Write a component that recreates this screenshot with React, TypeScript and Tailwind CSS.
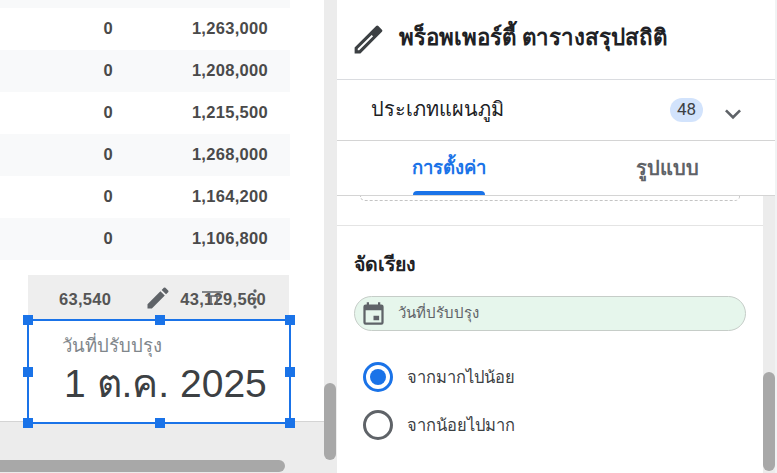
import React from 'react';

const font = "font-['Roboto','Noto_Sans','Liberation_Sans',sans-serif]";

const rows = [
  { value: '1,263,000', stripe: false },
  { value: '1,208,000', stripe: true },
  { value: '1,215,500', stripe: false },
  { value: '1,268,000', stripe: true },
  { value: '1,164,200', stripe: false },
  { value: '1,106,800', stripe: true },
];

const Handle = ({ className }: { className: string }) => (
  <span className={`absolute w-[10px] h-[10px] bg-[#1a73e8] ${className}`} />
);

const Canvas = () => (
  <div className="relative h-[422px] bg-white border-b border-[#d4d4d4] font-['Liberation_Sans',sans-serif]">
    <div className="w-[290px] h-[8px] bg-[#f8f9fa]" />
    {rows.map((r) => (
      <div
        key={r.value}
        className={`w-[290px] h-[42px] pb-[2px] flex items-center justify-end text-[16.5px] tracking-[0.3px] font-bold text-[#4a4a4a] ${r.stripe ? 'bg-[#f8f9fa]' : 'bg-white'}`}
      >
        <span>0</span>
        <span className="w-[177px] pr-[22px] text-right">{r.value}</span>
      </div>
    ))}
    <div className="mt-[15px] ml-[28px] w-[261px] h-[46px] bg-[#eeeeee] flex items-start pt-[14px] text-[16.5px] leading-[20px] tracking-[0.3px] font-bold text-[#555555]">
      <span className="ml-[31px]">63,540</span>
      <span className="ml-[69px]">43,129,560</span>
    </div>

    {/* hover toolbar icons */}
    <svg className="absolute left-[144px] top-[284px] w-[28px] h-[28px]" viewBox="0 0 24 24" fill="#5f6368">
      <path d="M3 17.25V21h3.75L17.81 9.94l-3.75-3.75L3 17.25zM20.71 7.04a1 1 0 0 0 0-1.41l-2.34-2.34a1 1 0 0 0-1.41 0l-1.83 1.83 3.75 3.75 1.83-1.83z" />
    </svg>
    <svg className="absolute left-[201px] top-[290px] w-[23px] h-[16px]" viewBox="0 0 23 16" fill="none" stroke="#5f6368" strokeWidth="1.6">
      <path d="M1 2h21M5 6h16M10 6v9M16 6v9" />
    </svg>
    <svg className="absolute left-[250px] top-[288px] w-[10px] h-[22px]" viewBox="0 0 10 22" fill="#5f6368">
      <circle cx="5" cy="3" r="1.7" />
      <circle cx="5" cy="11" r="1.7" />
      <circle cx="5" cy="19" r="1.7" />
    </svg>

    {/* selected scorecard */}
    <div className="absolute left-[27px] top-[319px] w-[264px] h-[105px] bg-white border-2 border-[#1a73e8]">
      <div className="pl-[33px] pt-[12px] text-[18.5px] leading-[26px] text-[#80868b] whitespace-nowrap">วันที่ปรับปรุง</div>
      <div className="pl-[35px] pt-[2px] text-[39px] leading-[46px] text-[#3c4043] whitespace-nowrap">1 ต.ค. 2025</div>
      <Handle className="left-[-6px] top-[-6px]" />
      <Handle className="left-[126px] top-[-6px]" />
      <Handle className="right-[-6px] top-[-6px]" />
      <Handle className="left-[-6px] top-[46px]" />
      <Handle className="right-[-6px] top-[46px]" />
      <Handle className="left-[-6px] bottom-[-6px]" />
      <Handle className="left-[126px] bottom-[-6px]" />
      <Handle className="right-[-6px] bottom-[-6px]" />
    </div>
  </div>
);

export default function App() {
  return (
    <div className={`w-[777px] h-[473px] flex overflow-hidden bg-white ${font}`}>
      <div className="w-[324px] flex flex-col shrink-0">
        <Canvas />
        <div className="flex-1 bg-[#ececec] flex flex-col justify-end">
          <div className="w-[285px] h-[12px] mb-[1px] rounded-r-full bg-[#a8a8a8]" />
        </div>
      </div>

      <div className="w-[13px] bg-[#ececec] shrink-0 flex flex-col pt-[383px]">
        <div className="w-[12px] h-[77px] rounded-full bg-[#a8a8a8]" />
      </div>

      <div className="flex-1 flex flex-col">
        <div className="h-[80px] flex items-center border-b border-[#dadce0] pl-[13px]">
          <svg className="w-[37px] h-[37px]" viewBox="0 0 24 24" fill="#3c4043" fillRule="evenodd">
            <path d="M3 17.25V21h3.75L20.71 7.04a1 1 0 0 0 0-1.41l-2.34-2.34a1 1 0 0 0-1.41 0L3 17.25zM5 19v-.92l9.06-9.06.92.92L5.92 19H5z" />
          </svg>
          <span className="ml-[12px] mb-[4px] text-[22.3px] font-bold text-[#202124] whitespace-nowrap">พร็อพเพอร์ตี้ ตารางสรุปสถิติ</span>
        </div>

        <div className="h-[61px] flex items-center border-b border-[#d4d4d4] pl-[34px]">
          <span className="text-[19.9px] text-[#202124] flex-1">ประเภทแผนภูมิ</span>
          <span className="w-[33px] h-[24px] rounded-full bg-[#d2e3fc] flex items-center justify-center text-[17px] text-[#3c4043]">48</span>
          <svg className="w-[32px] h-[32px] ml-[14px] mr-[26px] mt-[7px]" viewBox="0 0 24 24" fill="#5f6368">
            <path d="M7.41 8.59 12 13.17l4.59-4.58L18 10l-6 6-6-6z" />
          </svg>
        </div>

        <div className="h-[55px] flex border-b border-[#d4d4d4]">
          <div className="w-[224px] flex flex-col items-center justify-end">
            <span className="text-[18.5px] font-bold text-[#1a73e8] mb-[8px]">การตั้งค่า</span>
            <span className="w-[72px] h-[4px] rounded-t-[4px] bg-[#1a73e8]" />
          </div>
          <div className="flex-1 flex items-center justify-center text-[20px] font-bold text-[#5f6368] pr-[2px]">รูปแบบ</div>
        </div>

        <div className="flex-1 flex">
          <div className="flex-1 flex flex-col">
            <div className="mx-[23px] h-[5px] rounded-b-[12px] border-b border-x border-dashed border-[#c4c4c4]" />
            <div className="h-[25px] border-b border-[#e4e4e4]" />
            <div className="pl-[17px] pt-[25px] text-[19.5px] leading-[28px] font-bold text-[#202124]">จัดเรียง</div>
            <div className="ml-[17px] mt-[17px] w-[392px] h-[35px] rounded-full bg-[#e6f6ec] border border-[#c6cdc8] flex items-center">
              <svg className="w-[27px] h-[27px] ml-[5px]" viewBox="0 0 24 24" fill="#5f6368" fillRule="evenodd">
                <path d="M19 4h-1V2h-2v2H8V2H6v2H5a2 2 0 0 0-2 2v14a2 2 0 0 0 2 2h14a2 2 0 0 0 2-2V6a2 2 0 0 0-2-2zM5 9h14v11H5V9zM12 14h5v4h-5z" />
              </svg>
              <span className="ml-[11px] text-[15px] text-[#5f6368] whitespace-nowrap">วันที่ปรับปรุง</span>
            </div>
            <div className="ml-[26px] mt-[31px] flex items-center h-[30px]">
              <span className="w-[30px] h-[30px] rounded-full border-[3px] border-[#1a73e8] flex items-center justify-center">
                <span className="w-[16px] h-[16px] rounded-full bg-[#1a73e8]" />
              </span>
              <span className="ml-[14px] pt-[3px] text-[16.5px] text-[#3c4043]">จากมากไปน้อย</span>
            </div>
            <div className="ml-[26px] mt-[18px] flex items-center h-[30px]">
              <span className="w-[30px] h-[30px] rounded-full border-[3px] border-[#5f6368]" />
              <span className="ml-[14px] pt-[3px] text-[16.5px] text-[#3c4043]">จากน้อยไปมาก</span>
            </div>
          </div>
          <div className="w-[12px] bg-[#ececec] flex flex-col pt-[176px]">
            <div className="w-[12px] h-[99px] rounded-full bg-[#a8a8a8]" />
          </div>
        </div>
      </div>
      <div className="w-[2px] shrink-0 bg-[#f1f3f4]" />
    </div>
  );
}
